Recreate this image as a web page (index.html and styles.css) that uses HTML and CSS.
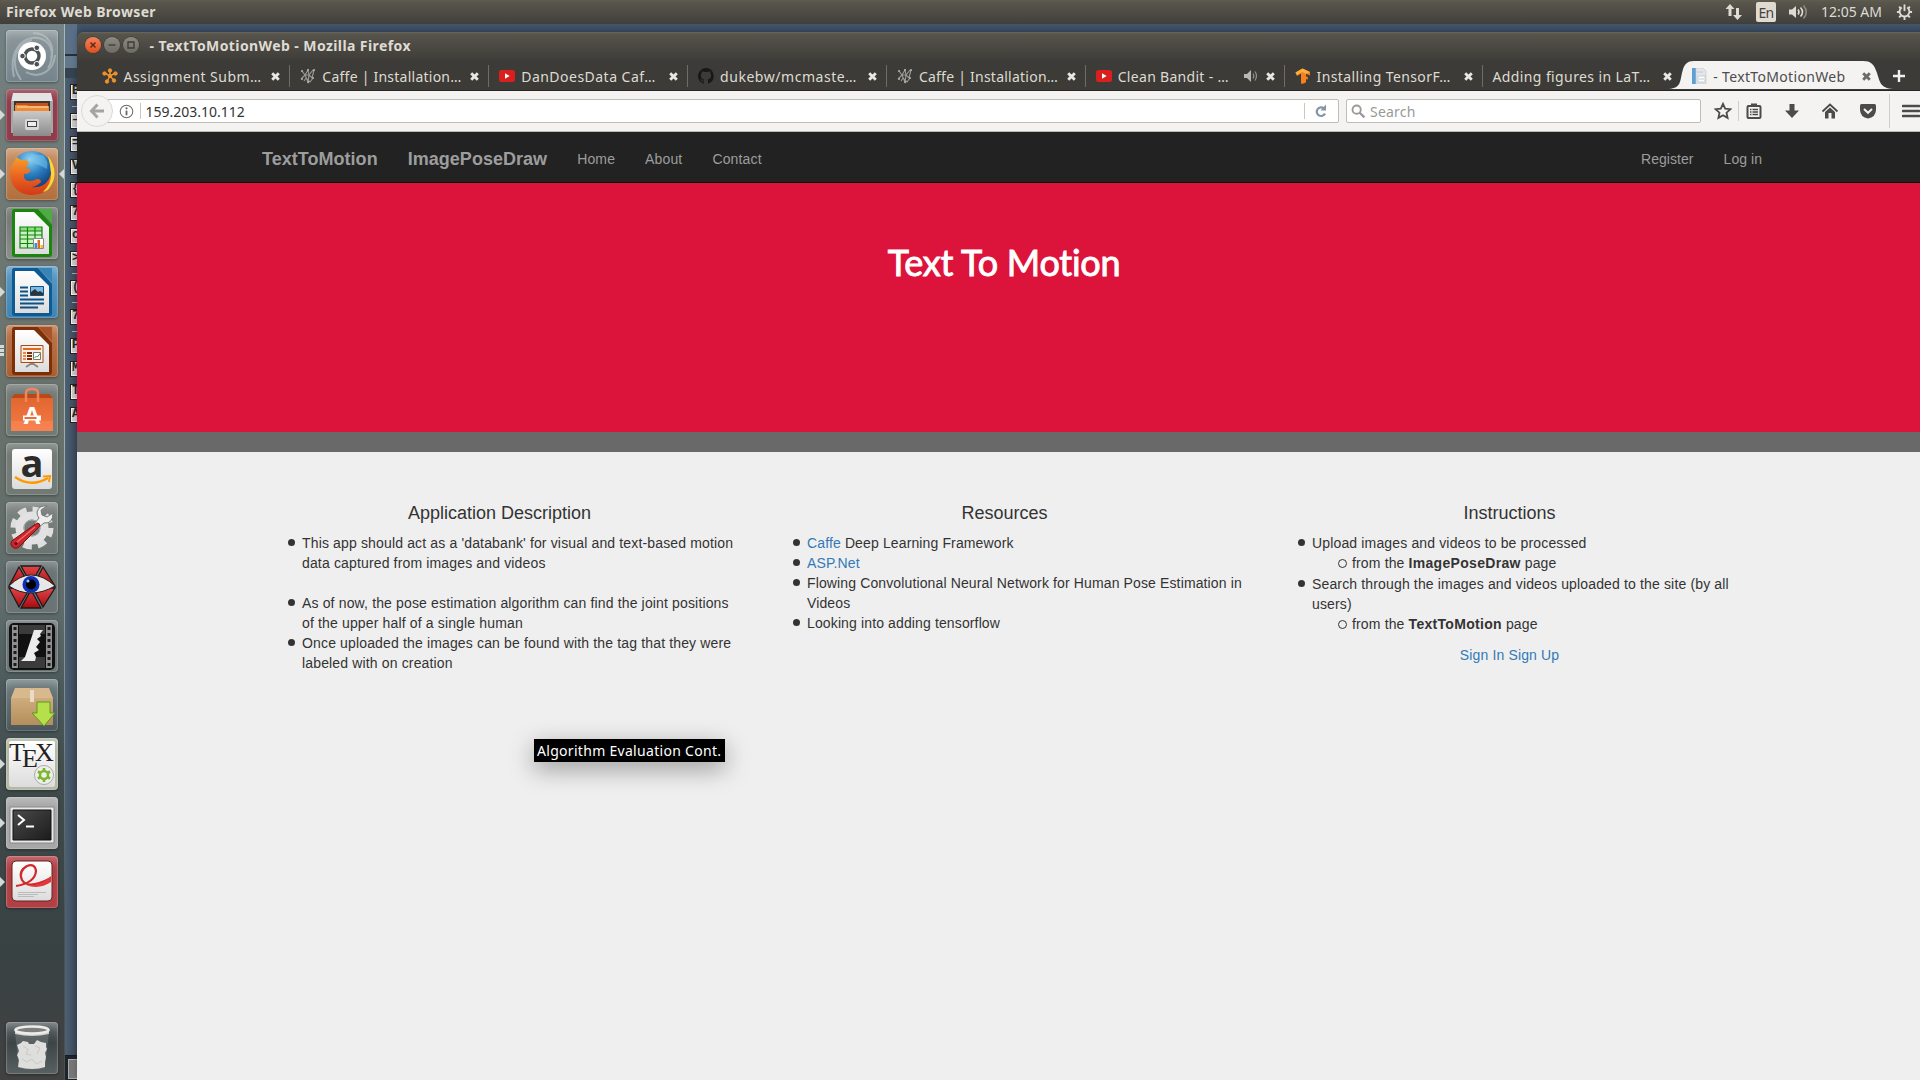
FILE: index.html
```html
<!DOCTYPE html>
<html lang="en">
<head>
<meta charset="utf-8">
<title>- TextToMotionWeb - Mozilla Firefox</title>
<link rel="stylesheet" href="styles.css">
</head>
<body>
<svg class="defs" width="0" height="0" aria-hidden="true">
  <defs>
    <linearGradient id="paper" x1="0" y1="0" x2="0" y2="1"><stop offset="0" stop-color="#fff"/><stop offset="1" stop-color="#dcdcdc"/></linearGradient>
    <linearGradient id="metal" x1="0" y1="0" x2="0" y2="1"><stop offset="0" stop-color="#c9c9c9"/><stop offset="1" stop-color="#8b8b8b"/></linearGradient>
    <linearGradient id="orangeBag" x1="0" y1="0" x2="0" y2="1"><stop offset="0" stop-color="#e2662f"/><stop offset="1" stop-color="#f47a45"/></linearGradient>
    <linearGradient id="box" x1="0" y1="0" x2="0" y2="1"><stop offset="0" stop-color="#cfac7d"/><stop offset="1" stop-color="#b48e5c"/></linearGradient>
    <radialGradient id="globe" cx=".45" cy=".2" r=".8"><stop offset="0" stop-color="#8fd3f4"/><stop offset=".45" stop-color="#2a7fc0"/><stop offset="1" stop-color="#0a2a66"/></radialGradient>
    <linearGradient id="fox" x1="0" y1="0" x2="0" y2="1"><stop offset="0" stop-color="#f6a02c"/><stop offset=".5" stop-color="#ea6420"/><stop offset="1" stop-color="#d13a17"/></linearGradient>
    <linearGradient id="red" x1="0" y1="0" x2="0" y2="1"><stop offset="0" stop-color="#e0454a"/><stop offset="1" stop-color="#a80b0e"/></linearGradient>
    <linearGradient id="term" x1="0" y1="0" x2="1" y2="1"><stop offset="0" stop-color="#4a4a4a"/><stop offset="1" stop-color="#1c1c1c"/></linearGradient>
    <symbol id="close" viewBox="0 0 10 10"><path d="M2 2l6 6M8 2l-6 6" stroke="currentColor" stroke-width="2.6" fill="none"/></symbol>
    <symbol id="caffe" viewBox="0 0 16 16"><g fill="none" stroke="#9b9a96" stroke-width="1.1"><path d="M2 3l3 4 3-5 1 5 4-5M1 11l4-4 3 7 1-7 3 3 2-8M5 7l4 0M4 13l2-3 4 4 3-4"/></g><g fill="#b5b4b0"><circle cx="2" cy="3" r="1"/><circle cx="8" cy="2" r="1"/><circle cx="14" cy="2" r="1"/><circle cx="2" cy="11" r="1"/><circle cx="8" cy="14" r="1"/><circle cx="13" cy="10" r="1"/></g></symbol>
    <symbol id="youtube" viewBox="0 0 16 16"><rect y="2" width="16" height="12" rx="2.5" fill="#d9201f"/><path d="M6 5.3v5.4l4.6-2.7z" fill="#fff"/></symbol>
  </defs>
</svg>

<div class="desktop">
  <header class="panel">
    <span class="ui panel-title">Firefox Web Browser</span>
    <div class="indicators">
      <svg class="ind-net" viewBox="0 0 18 18"><path d="M5 1L.5 6h3v7h3V6h3zM12.500 17L17 12h-3V5h-3v7H8z" fill="#dfdbd2"/></svg>
      <span class="ind-lang">En</span>
      <svg class="ind-vol" viewBox="0 0 20 16"><path d="M0 5.500h3L7 2v12L3 10.500H0z" fill="#dfdbd2"/><path d="M9 5.500q2 2.500 0 5M11.500 3.500q4 4.500 0 9" fill="none" stroke="#dfdbd2" stroke-width="1.600"/><path d="M14.500 1.500q5.500 6.500 0 13" fill="none" stroke="#8d8a82" stroke-width="1.600"/></svg>
      <span class="ui clock">12:05 AM</span>
      <svg class="ind-gear" viewBox="0 0 18 18"><g stroke="#dfdbd2" fill="none"><path d="M6 4.300A5.200 5.200 0 1 0 12 4.300" stroke-width="2"/><path d="M9 1v7" stroke-width="2"/><path d="M1 9h3M14 9h3M9 14v3.500M3.300 3.300l2 2M14.700 3.300l-2 2M3.300 14.700l2-2M14.700 14.700l-2-2" stroke-width="2"/></g></svg>
    </div>
  </header>

  <div class="workspace">
    <nav class="launcher">
      <div class="tile t-dash"><svg viewBox="0 0 52 52"><g fill="none" stroke="#c4ccce" stroke-width="2" opacity=".55"><path d="M8 47C2 20 18 3 36 9c12 5 12 20 6 29"/><path d="M15 50C4 34 8 14 26 10"/><path d="M20 42c14 8 28-2 29-17"/><path d="M27 3c16 0 22 14 18 25"/></g><circle cx="26" cy="26" r="14" fill="#fff"/><circle cx="26" cy="26" r="7" fill="none" stroke="#4c5357" stroke-width="3.400"/><g fill="#4c5357" stroke="#fff" stroke-width="1"><circle cx="16.500" cy="26" r="2.800"/><circle cx="30.800" cy="17.800" r="2.800"/><circle cx="30.800" cy="34.200" r="2.800"/></g></svg></div>
      <div class="tile t-files run"><svg viewBox="0 0 52 52"><path d="M7 4h38l2 9H5z" fill="#e4e4e4"/><path d="M5 12h42v32H5z" fill="#a5a5a5"/><path d="M8 12h36v11H8z" fill="#3a3532"/><path d="M10 14h32v9H10z" fill="#c4521e"/><path d="M9 16h12l1 1h21v6H9z" fill="#f08a35"/><path d="M11 18h31" stroke="#fde3bd"/><path d="M7 22h38v25H7z" fill="url(#metal)"/><rect x="19" y="30" width="14" height="11" rx="2" fill="#d8d8d8"/><rect x="21.500" y="32.500" width="9" height="5" fill="#eee" stroke="#444"/></svg></div>
      <div class="tile t-firefox run focus"><svg viewBox="0 0 52 52"><circle cx="26" cy="24" r="21" fill="url(#globe)"/><path d="M25 5q5 3 12 2 6 6 4 14l-8-4q-9-2-8-12z" fill="#7ccbed" opacity=".5"/><path d="M43 9q9 15 3 27-7 12-22 11Q6 45 4 27 4 17 9 12l1-3 5 3q5-1 8 2l-3 6 5 2q-2 4-7 4-1 6 5 7 5 0 8-2 4 0 4 3-5 5-10 5 12 2 18-8 5-9 0-22z" fill="url(#fox)"/><path d="M42 8q12 17 2 31-2 4-7 5 9-9 8-19-1-10-3-17z" fill="#fbd73a"/></svg></div>
      <div class="tile t-calc"><svg viewBox="0 0 52 52"><path d="M8 2h24l14 16v29q0 3-3 3H9q-3 0-3-3V5q0-3 2-3z" fill="#18870b"/><path d="M32 2h14v14z" fill="#4cae3f"/><path d="M9 5h19l15 15v27H9z" fill="url(#paper)"/><path d="M14 20h22v21H14z" fill="#c7f3c2"/><path d="M14 20h22v4H14z" fill="#8ade7e"/><path d="M14 20h22v21H14zM21.500 20v21M29 20v21M14 24h22M14 28h22M14 32h22M14 36.500h22" fill="none" stroke="#15820a" stroke-width="1.200"/><path d="M27.500 31.500h10v10h-10z" fill="#fff" stroke="#888"/><path d="M28.500 36h2.500v5h-2.500z" fill="#2a97d6"/><path d="M31.500 33h2.500v8h-2.500z" fill="#e56a1f"/><path d="M34.500 38h2.500v3h-2.500z" fill="#edc321"/></svg></div>
      <div class="tile t-writer run"><svg viewBox="0 0 52 52"><path d="M8 2h24l14 16v29q0 3-3 3H9q-3 0-3-3V5q0-3 2-3z" fill="#0d5b92"/><path d="M32 2h14v14z" fill="#3984b5"/><path d="M9 5h19l15 15v27H9z" fill="url(#paper)"/><path d="M14 21.500h8M14 25.500h8M14 29.500h8M14 33.500h24M14 37.500h24M14 41.500h18" stroke="#0b5387" stroke-width="1.800"/><path d="M24.500 20.500h13v9h-13z" fill="#79bce8" stroke="#0b5387"/><path d="M25 29v-3l4-3 3 3 2-1 3 2v2z" fill="#333"/></svg></div>
      <div class="tile t-impress multi"><svg viewBox="0 0 52 52"><path d="M8 2h24l14 16v29q0 3-3 3H9q-3 0-3-3V5q0-3 2-3z" fill="#7c2f08"/><path d="M32 2h14v14z" fill="#a8542a"/><path d="M9 5h19l15 15v27H9z" fill="url(#paper)"/><path d="M26 37v3M26 38l-6 4M26 38l6 4" stroke="#888" stroke-width="2"/><path d="M15 20.500h22v17H15z" fill="#fdeee4" stroke="#a94a15"/><path d="M17 24h18" stroke="#dd6a26" stroke-width="2"/><path d="M17 28h3M17 31h3M17 34h3" stroke="#dd6a26" stroke-width="1.500"/><path d="M21 28h5M21 31h5M21 34h5" stroke="#7c2f08" stroke-width="1.800"/><path d="M27.500 27.500h7v7h-7z" fill="#fff" stroke="#777"/><path d="M28.500 33l2-2 1 1 2.500-3.500" fill="none" stroke="#3a9a2c"/></svg></div>
      <div class="tile t-soft"><svg viewBox="0 0 52 52"><path d="M5 14l4-4h34l4 4z" fill="#b84a1a"/><path d="M5 14h42v33H5z" fill="url(#orangeBag)"/><path d="M20 18V9q0-4 6-4t6 4v9" fill="none" stroke="#f0855a" stroke-width="2.500"/><path d="M5 37h42v10H5z" fill="#fb8a5c" opacity=".5"/><text x="26" y="40" class="soft-a">A</text><path d="M17 34h18" stroke="#fff" stroke-width="5"/><path d="M18.500 34h12" stroke="#ef6d36" stroke-width="2"/></svg></div>
      <div class="tile t-amazon"><svg viewBox="0 0 52 52"><rect x="6" y="6" width="40" height="40" rx="3" fill="url(#paper)"/><text x="26" y="33.500" class="amazon-a">a</text><path d="M9 34q16 11 33 1" fill="none" stroke="#ff9900" stroke-width="2.400"/><path d="M37 33.500l7-.5-1 6" fill="none" stroke="#ff9900" stroke-width="2"/></svg></div>
      <div class="tile t-settings"><svg viewBox="0 0 52 52"><circle cx="26" cy="26" r="18.500" fill="none" stroke="#dedede" stroke-width="6" stroke-dasharray="8.500 6.030"/><circle cx="26" cy="26" r="12.500" fill="none" stroke="#e2e2e2" stroke-width="8"/><circle cx="26" cy="26" r="8" fill="none" stroke="#aaa" stroke-width="1"/><path d="M47 11l-6 4-5-2-1-5 6-4q-8-1-10 6 0 4 2 6l-5 6 4 4 6-5q9 1 9-10z" fill="#eee" stroke="#777"/><path d="M31 21q3 0 3 3L14 44q-4 4-7.500 1Q3 41 7 38z" fill="#c9252b" stroke="#7a1215"/><path d="M29 25L10 41" stroke="#ee6b6b" stroke-width="1.500"/><circle cx="10" cy="41.500" r="1.500" fill="#511"/></svg></div>
      <div class="tile t-eye"><svg viewBox="0 0 52 52"><g fill="url(#red)" stroke="#1a1a1a" stroke-width="1.300"><path d="M13 6l11 19H3zM15 5h20L25 23zM37 6l12 19H27z"/><path d="M3 27h21L13 46zM27 27h22L37 46zM25 29l10 18H15z"/></g><path d="M3 25q11-11 22-11 12 0 24 11-12 7-24 7T3 25z" fill="#e7e7e7" stroke="#222"/><circle cx="25" cy="23.500" r="8.500" fill="#0c2fb4"/><circle cx="25" cy="23.500" r="5" fill="#000"/><circle cx="22" cy="20" r="1.500" fill="#9fc0ff"/></svg></div>
      <div class="tile t-film"><svg viewBox="0 0 52 52"><rect x="3" y="3" width="46" height="47" rx="5" fill="#111"/><path d="M6 5h6v43H6zM40 5h6v43h-6z" fill="#8f8f8f"/><path d="M9 7v40M43 7v40" stroke="#1a1a1a" stroke-width="3" stroke-dasharray="3 3"/><path d="M13 5h26v9H13zM13 37h26v11H13z" fill="#3b3b3b"/><path d="M28 10h9l-3 4 1 2-4 3 3 3-4 5 3 3-5 3 2 4-1 4H15l4-4z" fill="#ececec"/></svg></div>
      <div class="tile t-pkg"><svg viewBox="0 0 52 52"><path d="M9 9h34l4 10H5z" fill="#d8b98e"/><path d="M5 19h42v27H5z" fill="url(#box)"/><path d="M24 11h4v12h-4z" fill="#eadcc4"/><path d="M31 23h13v11h5L38 47 26 34h5z" fill="#b5e04b" stroke="#5c9a17"/></svg></div>
      <div class="tile t-tex run"><svg viewBox="0 0 52 52"><rect x="3" y="3" width="46" height="46" rx="2" fill="url(#paper)"/><text x="3" y="22.500" class="tex-l">T</text><text x="16" y="28.500" class="tex-l">E</text><text x="29" y="22.500" class="tex-l">X</text><circle cx="38" cy="37" r="9.500" fill="#eee" stroke="#aaa"/><circle cx="38" cy="37" r="4" fill="none" stroke="#7cb82b" stroke-width="2.400"/><path d="M38 30v3M38 41v3M31.900 33.500l2.600 1.500M41.500 39l2.600 1.500M31.900 40.500l2.600-1.500M41.500 35l2.600-1.500" stroke="#7cb82b" stroke-width="2.600"/></svg></div>
      <div class="tile t-term run"><svg viewBox="0 0 52 52"><path d="M4 10h44v36H4z" fill="#e8e8e8" stroke="#888"/><path d="M7 13h38v30H7z" fill="url(#term)" stroke="#111"/><path d="M12 18l6 5-6 5" fill="none" stroke="#fff" stroke-width="2"/><path d="M20 29.500h8" stroke="#fff" stroke-width="2"/></svg></div>
      <div class="tile t-pdf run"><svg viewBox="0 0 52 52"><rect x="6" y="5" width="40" height="40" rx="4" fill="url(#paper)" stroke="#6a2020"/><path d="M10 30Q29 27 30 15q-1-8-9-5-9 5-5 14 6 10 29-2" fill="none" stroke="#d3272c" stroke-width="2.200"/><path d="M20 29q14 2 25-9v6q-12 8-25 3z" fill="#e0393c"/><path d="M12 36.500h28M12 38.500h20M12 40.500h16" stroke="#bbb"/></svg></div>
      <div class="tile t-trash"><svg viewBox="0 0 52 52"><path d="M9 10h34l-4 36q-13 3-26 0z" fill="#8e9596" opacity=".35"/><path d="M11 23l4-2 2-2 5 1 1 2 5 0 3-4 4 2 5 1 0 4 1 2-2 4 1 4-1 5 0 5q-12 4-27 0l1-7-2-5 2-4z" fill="#dededc"/><path d="M17 24l5 3-2 5 5 1M29 24l5 2-3 6M16 37l5 3 5-3 4 5 6-3" fill="none" stroke="#c9c9c6" stroke-width="1"/><path d="M9 9q17 6 34 0v3q-17 4-34 0z" fill="#cfcfca"/><ellipse cx="26" cy="8" rx="16.500" ry="3.500" fill="#7c807f" stroke="#ecece8" stroke-width="2.600"/></svg></div>
    </nav>

    <aside class="palette">
      <i class="key">B</i><i class="rule"></i><i class="key">–</i><i class="key">=</i><i class="key">V</i><i class="key">{</i><i class="key">7</i><i class="key">c</i><i class="key">&gt;</i><i class="rule"></i><i class="key">(</i><i class="rule"></i><i class="key">7</i><i class="rule"></i><i class="key">P</i><i class="key">M</i><i class="key">T</i><i class="key">A</i>
      <span class="palette-foot"><span class="foot-box"></span></span>
    </aside>

    <main class="window">
      <div class="titlebar">
        <span class="wb wb-close"><svg viewBox="0 0 16 16"><path d="M5.500 5.500l5 5M10.500 5.500l-5 5" stroke="#5a2312" stroke-width="1.300"/></svg></span>
        <span class="wb"><svg viewBox="0 0 16 16"><path d="M4.500 8h7" stroke="#3c3b37" stroke-width="1.300"/></svg></span>
        <span class="wb"><svg viewBox="0 0 16 16"><path d="M5 5h6v6H5z" fill="none" stroke="#3c3b37" stroke-width="1.300"/></svg></span>
        <span class="ui window-title">- TextToMotionWeb - Mozilla Firefox</span>
      </div>

      <div class="tabs">
        <div class="tab"><svg class="fav" viewBox="0 0 16 16"><g fill="#f0922b" stroke="#f0922b"><path d="M8 8L2.500 5M8 8V2.500M8 8l5.500-3M8 8l-3 5.500M8 8l4 4.500" stroke-width="1.500"/><circle cx="2.500" cy="5.500" r="1.700"/><circle cx="8" cy="2.500" r="1.700"/><circle cx="13.500" cy="5.500" r="1.700"/><circle cx="5" cy="13.500" r="1.700"/><circle cx="12" cy="12.500" r="1.700"/><circle cx="8" cy="8" r="1.700"/></g></svg><span class="ui label l1">Assignment Subm…</span><svg class="x"><use href="#close"/></svg></div>
        <div class="tab"><svg class="fav"><use href="#caffe"/></svg><span class="ui label l2">Caffe | Installation…</span><svg class="x"><use href="#close"/></svg></div>
        <div class="tab"><svg class="fav"><use href="#youtube"/></svg><span class="ui label l3">DanDoesData Caf…</span><svg class="x"><use href="#close"/></svg></div>
        <div class="tab"><svg class="fav" viewBox="0 0 16 16"><path d="M8 0a8 8 0 0 0-2.500 15.600c.4.100.5-.2.500-.4v-1.500c-2.200.5-2.700-1-2.700-1-.4-.9-.9-1.200-.9-1.200-.7-.5.1-.5.1-.5.800.1 1.200.8 1.200.8.700 1.300 1.900.9 2.300.7.100-.5.300-.9.500-1.100-1.800-.2-3.600-.9-3.600-4 0-.9.300-1.600.8-2.100-.1-.2-.4-1 .1-2.100 0 0 .7-.2 2.200.8a7.500 7.500 0 0 1 4 0c1.500-1 2.200-.8 2.200-.8.400 1.100.2 1.900.1 2.100.5.600.8 1.300.8 2.100 0 3.100-1.900 3.700-3.700 3.900.3.300.6.800.6 1.500v2.200c0 .200.1.500.6.400A8 8 0 0 0 8 0z" fill="#191717"/></svg><span class="ui label l4">dukebw/mcmaste…</span><svg class="x"><use href="#close"/></svg></div>
        <div class="tab"><svg class="fav"><use href="#caffe"/></svg><span class="ui label l2">Caffe | Installation…</span><svg class="x"><use href="#close"/></svg></div>
        <div class="tab"><svg class="fav"><use href="#youtube"/></svg><span class="ui label l5">Clean Bandit - …</span><svg class="sound" viewBox="0 0 14 12"><path d="M0 4h3l4-4v12L3 8H0z" fill="#bab8b2"/><path d="M9 3.500q1.500 2.500 0 5M11 1.500q3 4.500 0 9" fill="none" stroke="#8f8d88" stroke-width="1.300"/></svg><svg class="x"><use href="#close"/></svg></div>
        <div class="tab"><svg class="fav" viewBox="0 0 16 16"><path d="M.5 4.500L7.500.5l7.500 3.500v3.500L11 5.700v2.500l2 1-.5 2.500-1.500-.6v3.500L7 16l-1-1V5.500L2 8z" fill="#f5801f"/><path d="M.5 4.500L7.500.5l7.500 3.500-4 1.700L7.500 4 2 7z" fill="#fbb03b"/></svg><span class="ui label l6">Installing TensorF…</span><svg class="x"><use href="#close"/></svg></div>
        <div class="tab plain"><span class="ui label l7">Adding figures in LaT…</span><svg class="x"><use href="#close"/></svg></div>
        <div class="tab active">
          <svg class="shape" viewBox="0 0 224 28" preserveAspectRatio="none"><path d="M0 28C12 27 11 20 13 12 15 3 18 0 25 0H194C202 0 205 3 208 12 211 21 211 27 224 28z" fill="#f4f3f2"/></svg>
          <svg class="fav" viewBox="0 0 16 16"><path d="M1 0h4v16H1z" fill="#5b9fd6"/><path d="M5 0h7l3 3v13H5z" fill="#e3e7ec" stroke="#c3cad2" stroke-width=".7"/><path d="M7 8h7v6H7z" fill="#fff" stroke="#b9c4d0" stroke-width=".8"/><path d="M6 4h6M8 11h5" stroke="#c1c8d0"/></svg><span class="ui label l8">- TextToMotionWeb</span><svg class="x"><use href="#close"/></svg>
        </div>
        <svg class="plus" viewBox="0 0 14 14"><path d="M7 1v12M1 7h12" stroke="#f1f0ee" stroke-width="2.400"/></svg>
      </div>

      <div class="toolbar">
        <span class="back"><svg viewBox="0 0 16 16"><path d="M8.500 1.500L2.500 8l6 6.500M3 8h12" fill="none" stroke="#a6a4a1" stroke-width="3"/></svg></span>
        <div class="urlbar">
          <svg class="info" viewBox="0 0 16 16"><circle cx="8" cy="8" r="6.700" fill="none" stroke="#6b6b6b" stroke-width="1.100"/><path d="M8 7v5" stroke="#6b6b6b" stroke-width="2"/><circle cx="8" cy="4.600" r="1.200" fill="#6b6b6b"/></svg>
          <i class="vline"></i>
          <span class="ui url">159.203.10.112</span>
          <i class="vline end"></i>
          <svg class="reload" viewBox="0 0 14 14"><path d="M10 4.500A4.300 4.300 0 1 0 11 9.500" fill="none" stroke="#8694a3" stroke-width="2.200"/><path d="M12 .5v6H6.500z" fill="#8694a3"/></svg>
        </div>
        <div class="searchbar">
          <svg class="mag" viewBox="0 0 16 16"><circle cx="6" cy="6" r="4.400" fill="none" stroke="#999" stroke-width="2"/><path d="M9.300 9.300l5 5" stroke="#999" stroke-width="2.500"/></svg>
          <span class="ui search">Search</span>
        </div>
        <svg class="tb star" viewBox="0 0 18 18"><path d="M9 1.800l2.200 4.800 5.200.6-3.900 3.500 1.100 5.200L9 13.300l-4.600 2.600 1.100-5.200L1.600 7.200l5.200-.6z" fill="none" stroke="#4b4b4b" stroke-width="1.800"/></svg>
        <i class="tsep"></i>
        <svg class="tb list" viewBox="0 0 18 18"><rect x="2.500" y="4" width="13" height="12" rx="1" fill="none" stroke="#4b4b4b" stroke-width="2"/><path d="M6 1.500h6v3H6z" fill="#4b4b4b"/><path d="M5 7.500h1.500M5 10h1.500M5 12.500h1.500M7.500 7.500H13M7.500 10H13M7.500 12.500H13" stroke="#4b4b4b" stroke-width="1.300"/></svg>
        <svg class="tb down" viewBox="0 0 18 18"><path d="M6.500 2h5v6.500H16L9 16 2 8.500h4.500z" fill="#4b4b4b"/></svg>
        <svg class="tb home" viewBox="0 0 18 18"><path d="M1.500 9.500L9 2.500l7.500 7" fill="none" stroke="#4b4b4b" stroke-width="1.800"/><path d="M4 10l5-4.500L14 10v6.500h-3.500V11h-3v5.500H4z" fill="#4b4b4b"/></svg>
        <svg class="tb pocket" viewBox="0 0 18 18"><path d="M2.500 2h13q1.500 0 1.500 1.500V8q-.5 7.500-8 8.500Q1.500 15.500 1 8V3.500Q1 2 2.500 2z" fill="#4b4b4b"/><path d="M5 7l4 3.800L13 7" fill="none" stroke="#f4f3f2" stroke-width="2"/></svg>
        <i class="tsep tall"></i>
        <svg class="tb menu" viewBox="0 0 18 18"><path d="M1 4h16M1 9h16M1 14h16" stroke="#4b4b4b" stroke-width="2.600" stroke-linecap="round"/></svg>
      </div>

      <div class="page">
        <nav class="navbar">
          <a class="brand">TextToMotion</a><a class="brand">ImagePoseDraw</a><a>Home</a><a>About</a><a>Contact</a><a class="push">Register</a><a>Log in</a>
        </nav>
        <section class="hero"><h1>Text To Motion</h1></section>
        <section class="columns">
          <div class="col">
            <h2>Application Description</h2>
            <ul>
              <li>This app should act as a 'databank' for visual and text-based motion data captured from images and videos</li>
              <li class="gap">As of now, the pose estimation algorithm can find the joint positions of the upper half of a single human</li>
              <li>Once uploaded the images can be found with the tag that they were labeled with on creation</li>
            </ul>
          </div>
          <div class="col resources">
            <h2>Resources</h2>
            <ul>
              <li><a>Caffe</a> Deep Learning Framework</li>
              <li><a>ASP.Net</a></li>
              <li>Flowing Convolutional Neural Network for Human Pose Estimation in Videos</li>
              <li>Looking into adding tensorflow</li>
            </ul>
          </div>
          <div class="col">
            <h2>Instructions</h2>
            <ul>
              <li>Upload images and videos to be processed
                <ul><li>from the <b>ImagePoseDraw</b> page</li></ul></li>
              <li class="nudge">Search through the images and videos uploaded to the site (by all users)
                <ul><li>from the <b>TextToMotion</b> page</li></ul></li>
            </ul>
            <p class="auth"><a>Sign In</a> <a>Sign Up</a></p>
          </div>
        </section>
      </div>
    </main>
  </div>
  <div class="ui tooltip">Algorithm Evaluation Cont.</div>
</div>
</body>
</html>
```
FILE: styles.css
```css
* { box-sizing: border-box; }
body { margin: 0; font-family: "Liberation Sans", Arial, sans-serif; overflow: hidden; }
svg { display: block; flex: none; }
.defs { position: absolute; }
.desktop { width: 1920px; height: 1080px; display: flex; flex-direction: column; overflow: hidden; position: relative; background: #43556a; }
.ui { font-family: "Noto Sans", "Open Sans", sans-serif; font-size: 14px; white-space: nowrap; }

/* top panel */
.panel { height: 24px; flex: none; display: flex; align-items: center; justify-content: space-between; padding: 0 7px 1px 6px; background: linear-gradient(#5f5d4f 0, #59564d 2px, #403f3a 100%); color: #dfdbd2; }
.panel-title { font-weight: 700; letter-spacing: .35px; }
.indicators { display: flex; align-items: center; }
.ind-net { width: 18px; height: 18px; }
.ind-lang { width: 20px; height: 20px; margin: 0 13px; border-radius: 2px; background: #dfdbd2; color: #45433e; font: 14px/21px "Noto Sans", sans-serif; text-align: center; letter-spacing: -.8px; }
.ind-vol { width: 20px; height: 16px; }
.clock { margin: 0 14px 0 12px; }
.ind-gear { width: 17px; height: 18px; }

/* launcher */
.workspace { flex: 1; display: flex; min-height: 0; }
.launcher { width: 65px; flex: none; padding: 6px 0 6px 6px; display: flex; flex-direction: column; gap: 7px; border-right: 1px solid #8f9a97; border-image: linear-gradient(#a9b8b5, #a0aba0 45%, #7b8a8b 65%, #4c504c 85%) 1; background: linear-gradient(#738287 0, #727c79 8%, #68716b 38%, #5f6c6b 55%, #4a5759 64%, #3f4a4a 72%, #394243 88%, #414141 100%); }
.tile { width: 52px; height: 52px; flex: none; position: relative; border-radius: 4px; box-shadow: inset 0 0 0 1px rgba(255,255,255,.18), inset 0 8px 8px -4px rgba(255,255,255,.28), 0 1px 3px rgba(0,0,0,.35); }
.tile svg { width: 52px; height: 52px; }
.t-dash { background: linear-gradient(#8d989b, #75848c); }
.t-files { background: #8f3b4a; }
.t-firefox { background: linear-gradient(#c99268, #b06f3d); }
.t-calc { background: linear-gradient(#6d726f, #8b8f8c); }
.t-writer { background: linear-gradient(#5e9ac4, #3d83b4); }
.t-impress { background: linear-gradient(#bd774d, #a75e31); }
.t-soft, .t-amazon { background: #727a76; }
.t-settings { background: linear-gradient(#7d8481, #6b7470); }
.t-eye, .t-film { background: #6b7475; }
.t-pkg { background: linear-gradient(#717f81, #4b575b); }
.t-tex { background: #b1b8a4; }
.t-term { background: #a7a7a8; }
.t-pdf { background: #b04044; }
.t-trash { margin-top: auto; background: linear-gradient(#5f6668, #3d4446 40%, #596062); }
.run::before { content: ""; position: absolute; left: -6px; top: 21px; border: 5px solid transparent; border-left-color: #d5d9d8; border-right: 0; }
.focus::after { content: ""; position: absolute; right: -6px; top: 21px; border: 5px solid transparent; border-right-color: #d5d9d8; border-left: 0; }
.multi::before { content: ""; position: absolute; left: -6px; top: 20px; width: 4px; height: 11px; background: repeating-linear-gradient(#d5d9d8 0 3px, transparent 3px 4px); }
.amazon-a { font: 700 38px "Open Sans", sans-serif; fill: #2b2b2b; text-anchor: middle; }
.soft-a { font: 700 24px "Open Sans", sans-serif; fill: #fff; text-anchor: middle; }
.tex-l { font: 26px "Liberation Serif", serif; fill: #222; }

/* strip of the application behind the browser */
.palette { width: 12px; flex: none; position: relative; padding: 60px 0 0 5px; display: flex; flex-direction: column; gap: 7px; overflow: hidden; background: linear-gradient(#5b7087 0 30px, #24303c 30px 32px, #62788f 32px 44px, #35424f 44px 54px, transparent 54px), linear-gradient(90deg, #4c6075, #3b4756); }
.key { width: 16px; height: 16px; flex: none; border: 1px solid #222; background: #c9c9c9; font: 700 12px/13px "Liberation Mono", monospace; color: #222; box-shadow: inset 0 0 0 1px #eee; padding-left: 1px; }
.rule { height: 1px; margin: -1px 0; flex: none; background: #9aa5ae; margin-left: 2px; }
.palette-foot { position: absolute; left: 0; right: 0; bottom: 0; height: 25px; border-top: 1px solid #161c22; background: #1e242d; padding: 3px 0 0 3px; }
.foot-box { display: block; width: 20px; height: 20px; border: 1px solid #aaa; background: #777; }

/* browser window */
.window { width: 1854px; flex: none; margin-top: 8px; display: flex; flex-direction: column; border-radius: 6px 6px 0 0; background: #3c3b37; position: relative; box-shadow: 0 -3px 5px rgba(20,30,45,.35); }
.titlebar { height: 28px; flex: none; display: flex; align-items: center; gap: 3px; padding: 0 0 2px 7.500px; border-radius: 6px 6px 0 0; background: linear-gradient(#6a685c 0, #57544c 2px, #3e3d39 100%); color: #dfdbd2; }
.wb { width: 16px; height: 16px; border-radius: 50%; background: linear-gradient(#8d8a82, #6d6b64); box-shadow: 0 0 0 .5px #33322e; }
.wb-close { background: linear-gradient(#f4835b, #e1501f); }
.window-title { font-weight: 700; margin-left: 8px; letter-spacing: .41px; }
.tabs { height: 31px; flex: none; display: flex; align-items: center; padding: 3px 0 1px 14.500px; border-bottom: 1px solid #262522; color: #dfdbd2; }
.tab { width: 198.850px; height: 22px; flex: none; position: relative; display: flex; align-items: center; padding: 0 8px 0 10px; border-right: 1px solid #6f6d68; }
.tab .fav { width: 16px; height: 16px; margin-right: 6px; }
.tab .x { width: 11px; height: 11px; margin-left: auto; color: #e8e7e4; }
.l1 { letter-spacing: .46px; }
.l2 { letter-spacing: .24px; }
.l3 { letter-spacing: .48px; }
.l4 { letter-spacing: .55px; }
.l5 { letter-spacing: .3px; }
.l6 { letter-spacing: .4px; }
.l7 { letter-spacing: .4px; }
.l8 { letter-spacing: .34px; }
.sound { width: 14px; height: 12px; margin-left: auto; }
.tab .sound + .x { margin-left: 7px; }
.plain { padding: 0 9px; border: 0; }
.active { width: 210px; color: #4c4c4c; padding: 0 20.500px 0 9px; border: 0; }
.active .fav, .active .label, .active .x { position: relative; }
.active .x { color: #6a6a6a; }
.shape { position: absolute; left: -13px; top: -4px; width: 224px; height: 28px; }
.plus { width: 14px; height: 14px; }

/* navigation toolbar */
.toolbar { height: 41px; flex: none; display: flex; align-items: center; background: #f4f3f2; border-bottom: 1px solid #b9b8b5; padding-left: 4px; position: relative; z-index: 1; }
.back { width: 32px; height: 32px; flex: none; border: 1px solid #dcdad8; border-radius: 50%; background: #f4f3f2; display: grid; place-items: center; z-index: 1; }
.back svg { width: 16px; height: 16px; }
.urlbar { width: 1247px; height: 24px; flex: none; margin-left: -21px; padding: 0 10px 0 25.500px; border: 1px solid #bebdba; border-radius: 2px; background: #fff; display: flex; align-items: center; }
.info { width: 15px; height: 15px; }
.vline { width: 1px; height: 16px; margin: 0 5px 0 6px; background: #c9c8c5; }
.vline.end { margin: 0 9px 0 auto; }
.url { color: #333; }
.reload { width: 14px; height: 14px; }
.searchbar { width: 355px; height: 24px; flex: none; margin-left: 7px; padding-left: 4px; border: 1px solid #bebdba; border-radius: 2px; background: #fff; display: flex; align-items: center; gap: 4px; }
.mag { width: 15px; height: 15px; }
.search { color: #999; letter-spacing: .2px; }
.tb { width: 18px; height: 18px; }
.star { margin-left: 13px; }
.tsep { width: 1px; height: 20px; margin: 0 6px; background: #cfcecb; }
.list, .down, .home { margin-right: 20px; }
.tsep.tall { height: 34px; margin: 0 12px; }

/* web page */
.page { flex: 1; background: #efefef; color: #333; font-size: 14px; line-height: 20px; letter-spacing: .15px; }
.page a { color: #337ab7; }
.navbar { height: 51px; background: #222; border-bottom: 1px solid #080808; padding: 3px 169px 0 185px; display: flex; align-items: center; gap: 30px; }
.navbar a { color: #9d9d9d; }
.navbar .brand { font-size: 18px; font-weight: 700; letter-spacing: .03px; }
.navbar .push { margin-left: auto; }
.navbar .push, .navbar .push + a { letter-spacing: .05px; }
.hero { height: 269px; background: #dc143c; border-bottom: 20px solid #696969; text-align: center; padding-top: 59px; }
.hero h1 { margin: 0; font: 400 36px/40px Lato, sans-serif; letter-spacing: -.25px; font-variant-ligatures: none; color: #fff; -webkit-text-stroke: .9px #fff; }
.columns { display: flex; padding: 51px 169px 0 170px; }
.col { width: 505px; padding: 0 15px; }
.col h2 { margin: 0 0 10px; font-size: 18px; line-height: 20px; font-weight: 400; text-align: center; letter-spacing: 0; }
.col ul { margin: 0 0 10px; padding-left: 40px; list-style: none; }
.col ul ul { margin: 0; }
.col li { position: relative; }
.col li::before { content: ""; position: absolute; left: -14.500px; top: 6px; width: 7px; height: 7px; border-radius: 50%; background: #333; }
.col li li::before { border: 1px solid #333; background: none; }
.col b { letter-spacing: .3px; }
.resources { letter-spacing: .13px; padding-right: 5px; }
.resources h2 { margin-right: 10px; }
.gap { margin-top: 20px; }
.nudge { margin-top: 1px; }
.auth { margin: 0; padding-top: 1px; text-align: center; }

.tooltip { position: absolute; left: 534px; top: 739px; width: 191px; height: 23px; padding-left: 3px; line-height: 23px; letter-spacing: .3px; background: #000; color: #fff; box-shadow: 0 7px 24px rgba(0,0,0,.36); }
```
